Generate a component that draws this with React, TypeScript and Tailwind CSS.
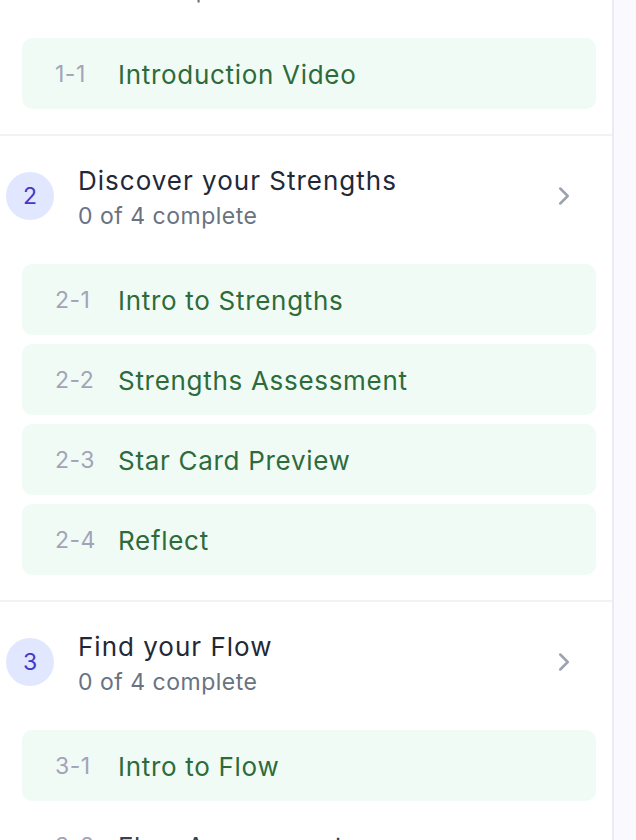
import { ChevronRight } from "lucide-react";

type Step = { id: string; title: string; locked?: boolean };
type Section = { num: number; title: string; done: number; steps: Step[] };

const sections: Section[] = [
  {
    num: 1,
    title: "Get Started",
    done: 0,
    steps: [{ id: "1-1", title: "Introduction Video" }],
  },
  {
    num: 2,
    title: "Discover your Strengths",
    done: 0,
    steps: [
      { id: "2-1", title: "Intro to Strengths" },
      { id: "2-2", title: "Strengths Assessment" },
      { id: "2-3", title: "Star Card Preview" },
      { id: "2-4", title: "Reflect" },
    ],
  },
  {
    num: 3,
    title: "Find your Flow",
    done: 0,
    steps: [
      { id: "3-1", title: "Intro to Flow" },
      { id: "3-2", title: "Flow Assessment", locked: true },
      { id: "3-3", title: "Rounding Out", locked: true },
      { id: "3-4", title: "Add Flow to Star Card", locked: true },
    ],
  },
];

function StepRow({ step }: { step: Step }) {
  return (
    <div
      className={`flex items-center h-[71px] pt-[2px] pl-[33px] rounded-[10px] ${
        step.locked ? "" : "bg-[#f1fbf6]"
      }`}
    >
      <span className="w-[63px] text-[23px] tracking-[0.5px] text-[#a3a3b8]">
        {step.id}
      </span>
      <span
        className={`text-[26px] tracking-[0.7px] ${
          step.locked ? "text-[#374151]" : "text-[#2e6b3a]"
        }`}
      >
        {step.title}
      </span>
    </div>
  );
}

function SectionBlock({ section, first }: { section: Section; first: boolean }) {
  return (
    <div
      className={`pt-[29px] pb-[25px] ${
        first ? "" : "border-t-2 border-[#f1f1f6]"
      }`}
    >
      <div className="flex items-center pl-[6px] pr-[33px]">
        <div className="-mt-[4px] w-[48px] h-[48px] rounded-full bg-[#e0e7ff] text-[#4338ca] text-[23px] flex items-center justify-center">
          {section.num}
        </div>
        <div className="ml-[24px] flex-1">
          <div className="text-[26px] leading-[32px] tracking-[1px] text-[#1f2937]">
            {section.title}
          </div>
          <div className="mt-[4px] text-[23px] leading-[30px] tracking-[0.5px] text-[#6b7280]">
            {section.done} of {section.steps.length} complete
          </div>
        </div>
        <ChevronRight
          size={30}
          strokeWidth={2}
          className="-mt-[4px] text-[#9ca3af]"
        />
      </div>
      <div className="mt-[33px] pl-[22px] pr-[16px] flex flex-col gap-[9px]">
        {section.steps.map((s) => (
          <StepRow key={s.id} step={s} />
        ))}
      </div>
    </div>
  );
}

export default function App() {
  return (
    <div
      className="flex h-screen overflow-hidden bg-[#f9f9fe]"
      style={{ fontFamily: "Inter, 'Noto Sans', sans-serif" }}
    >
      <div className="w-[614px] shrink-0 bg-white border-r-2 border-[#ebebf4] overflow-hidden">
        <div className="-mt-[90px]">
          {sections.map((s, i) => (
            <SectionBlock key={s.num} section={s} first={i === 0} />
          ))}
        </div>
      </div>
      <div className="flex-1" />
    </div>
  );
}
